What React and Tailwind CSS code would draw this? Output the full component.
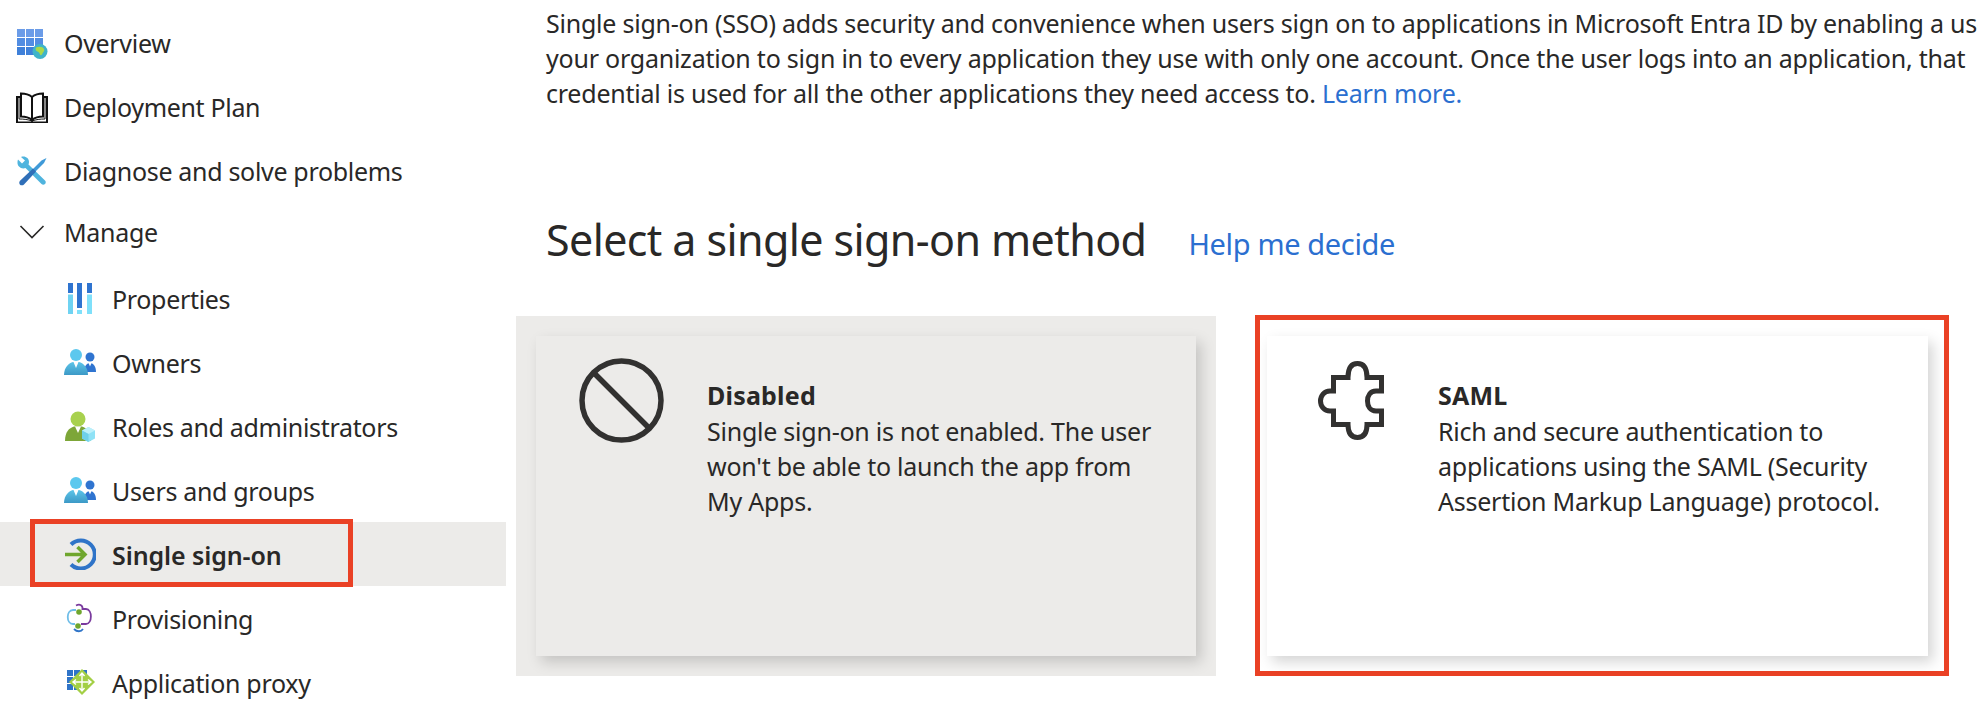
import React from 'react';

const OverviewIcon = () => (
    <svg width="32" height="32" viewBox="0 0 32 32">
        {[1, 10, 19].map((x) => <rect key={x} x={x} y="2" width="8" height="8" fill="#6b9ce8" />)}
        {[1, 10, 19].map((x) => <rect key={x} x={x} y="11" width="8" height="8" fill="#528de2" />)}
        {[1, 10, 19].map((x) => <rect key={x} x={x} y="20" width="8" height="8" fill="#3f80d9" />)}
        <circle cx="24" cy="24.5" r="7.5" fill="#3fb4c9" />
        <path d="M20 20.5c3-1.5 7-1 8 1.5 1 2-1 3-1.5 4.5-.5 1.500-2 2.500-2.500 1-.5-1.500-1-2.500-2.500-3-1.500-.5-2.500-2.500-1.500-4z" fill="#a9d94a" />
    </svg>
);

const BookIcon = () => (
    <svg width="32" height="32" viewBox="0 0 32 32" fill="none" stroke="#111" strokeWidth="2">
        <path d="M4.500 6H1v25.500h30V6h-3.500" />
        <path d="M5 2.500c4.500 0 8 1 11 3.500v23c-3-2.500-6.500-3.500-11-3.500z" />
        <path d="M27 2.500c-4.500 0-8 1-11 3.500v23c3-2.500 6.500-3.500 11-3.500z" />
        <path d="M3 6v22c5 0 9 .5 13 2 4-1.500 8-2 13-2V6" strokeWidth="1" />
    </svg>
);

const ToolsIcon = () => (
    <svg width="32" height="32" viewBox="0 0 32 32">
        <path d="M2 4.500 6 8.500 9 5.500 5 2c4-1.500 8 1 8 5 0 1-.2 1.500-.5 2.500L29 25.500c1 1 1 2.500 0 3.500s-2.500 1-3.500 0L9.500 13c-4 1.500-8.500-1.500-8-6 0-1 .2-1.800.5-2.500z" fill="#4fb4de" />
        <path d="M30.500 3 28 8 18.500 17.500 16 15 25.500 5.500z" fill="#3f9ad8" />
        <path d="M17 13.500 20 16.500 8 29.500c-1 1-3 1.200-4 .2s-1-3 0-4z" fill="#2f6fb8" />
    </svg>
);

const PropertiesIcon = () => (
    <svg width="32" height="32" viewBox="0 0 32 32">
        <rect x="4" y="1" width="5" height="10" fill="#2f74d0" />
        <rect x="4" y="12.500" width="5" height="20" fill="#6fd3f2" />
        <rect x="13" y="1" width="5" height="25" fill="#2f74d0" />
        <rect x="13" y="28" width="5" height="5" fill="#7fe0fa" />
        <rect x="23" y="1" width="5" height="10" fill="#2f74d0" />
        <rect x="23" y="12.500" width="5" height="20" fill="#7fe0fa" />
    </svg>
);

const UsersIcon = () => (
    <svg width="32" height="32" viewBox="0 0 32 32">
        <defs>
            <linearGradient id="userBody" x1="0" y1="0" x2="0" y2="1">
                <stop offset="0" stopColor="#5cc4e8" />
                <stop offset="1" stopColor="#3c99c6" />
            </linearGradient>
        </defs>
        <circle cx="26" cy="11" r="4.500" fill="#2f74d0" />
        <path d="M20 26c0-6 3-9 6-9s6 3 6 9z" fill="#2f74d0" />
        <path d="M24.500 17h3l-1.500 3.500z" fill="#fff" />
        <circle cx="12" cy="9" r="6" fill="#5cc8ee" />
        <path d="M0 29c0-8 5-12 9-13h6c4 1 9 5 9 13z" fill="url(#userBody)" />
        <path d="M9.500 16h5L12 22z" fill="#fff" />
    </svg>
);

const RolesIcon = () => (
    <svg width="32" height="32" viewBox="0 0 32 32">
        <circle cx="14" cy="9" r="7.500" fill="#a8d14e" />
        <path d="M1 31c0-9 4-13 9-14.500h8c5 1.500 9 5.500 9 14.500z" fill="#7da638" />
        <path d="M11 16.500h6L14 23z" fill="#fff" />
        <path d="M24.500 17 31 20.500v8L24.500 32 18 28.500v-8z" fill="#8fe2f6" />
        <path d="M18 20.500 24.500 24 31 20.500 24.500 17z" fill="#bdf0fa" />
        <path d="M24.500 24v8L18 28.500v-8z" fill="#6fd0ea" />
    </svg>
);

const SsoIcon = () => (
    <svg width="32" height="32" viewBox="0 0 32 32" fill="none">
        <path d="M7 6.500A14 14 0 1 1 7 26.500" stroke="#2f74c8" strokeWidth="4" />
        <path d="M1 16.500h19M13.500 9l7.500 7.500-7.500 7.500" stroke="#6fa62e" strokeWidth="3.500" />
    </svg>
);

const ProvisioningIcon = () => (
    <svg width="32" height="32" viewBox="0 0 32 32" fill="none">
        <path d="M12 8H9c-7 0-7 14 0 14h2" stroke="#6fbde8" strokeWidth="1.800" />
        <path d="M12 3.500c4-2 7 0 6.500 3.500H22c6.500 0 6.500 15 0 15h-5" stroke="#7a3b9e" strokeWidth="1.800" />
        <path d="M10 27c3 3 7 3 9 0" stroke="#2f74c8" strokeWidth="1.800" />
        <circle cx="15" cy="10" r="2.800" fill="#6fa62e" />
        <circle cx="14" cy="24" r="2.800" fill="#6fa62e" />
    </svg>
);

const ProxyIcon = () => (
    <svg width="32" height="32" viewBox="0 0 32 32">
        {[3, 10, 17].map((x) => [4, 11, 18].map((y) => (
            <rect key={`${x}-${y}`} x={x} y={y} width="6" height="6" fill="#2f74c8" />
        )))}
        <path d="M18 3 31 16 18 29 5 16z" fill="#a3cf45" />
        <path d="M18 7v18M9 16h18M15.500 10 18 7l2.500 3M15.500 22l2.500 3 2.500-3M12 13.500 9 16l3 2.500M24 13.500l3 2.500-3 2.500" stroke="#fff" strokeWidth="1.400" fill="none" />
    </svg>
);

const navTop = [
    { label: 'Overview', icon: <OverviewIcon /> },
    { label: 'Deployment Plan', icon: <BookIcon /> },
    { label: 'Diagnose and solve problems', icon: <ToolsIcon /> },
];

const navManage = [
    { label: 'Properties', icon: <PropertiesIcon /> },
    { label: 'Owners', icon: <UsersIcon /> },
    { label: 'Roles and administrators', icon: <RolesIcon /> },
    { label: 'Users and groups', icon: <UsersIcon /> },
    { label: 'Single sign-on', icon: <SsoIcon />, active: true },
    { label: 'Provisioning', icon: <ProvisioningIcon /> },
    { label: 'Application proxy', icon: <ProxyIcon /> },
];

const Sidebar = () => (
    <aside className="w-[506px] shrink-0 pt-[11px] tracking-[-0.32px]">
        {navTop.map((item) => (
            <div key={item.label} className="flex h-16 items-center gap-4 pl-4">
                {item.icon}
                <span>{item.label}</span>
            </div>
        ))}
        <div className="mb-[5px] flex h-[58px] items-center gap-4 pl-4">
            <svg width="32" height="32" viewBox="0 0 32 32" fill="none" stroke="#292827" strokeWidth="1.600">
                <path d="M4.500 10 16 21.500 27.500 10" />
            </svg>
            <span>Manage</span>
        </div>
        {navManage.map((item) => (
            <div key={item.label} className={`relative flex h-16 items-center gap-4 pl-16 ${item.active ? 'bg-[#ecebe9] font-semibold tracking-[-0.1px]' : ''}`}>
                {item.icon}
                <span className="mt-[2px]">{item.label}</span>
                {item.active && (
                    <div className="absolute left-[30px] top-[-3px] h-[68px] w-[323px] border-[5px] border-[#ea4125]" />
                )}
            </div>
        ))}
    </aside>
);

const BanIcon = () => (
    <svg width="85" height="85" viewBox="0 0 85 85" fill="none" stroke="#323130" strokeWidth="5.500">
        <circle cx="42.500" cy="42.500" r="39.500" />
        <path d="M15 15 70 70" />
    </svg>
);

const PuzzleIcon = () => (
    <svg width="66" height="79" viewBox="0 0 66 79" fill="none" stroke="#323130" strokeWidth="5">
        <path d="M15.500 16.500H30C30 8 33 2.500 39.500 2.500S49 8 49 16.500H63.500V30H58C52 30 49.500 35 49.500 40S52 50 58 50H63.500V63.500H49C49 72 46 76.500 39.500 76.500S30 72 30 63.500H15.500V50H12C6 50 2.500 45 2.500 40S6 30 12 30H15.500Z" />
    </svg>
);

const MethodCard = ({ title, lines, icon, iconClass, bg }) => (
    <div className={`flex h-[320px] shadow-[5px_6px_13px_rgba(0,0,0,0.17)] ${bg}`}>
        <div className={`w-[171px] shrink-0 ${iconClass}`}>{icon}</div>
        <div className="pt-[42px] tracking-[-0.24px]">
            <div className="mb-px font-bold tracking-[0.2px]">{title}</div>
            {lines.map((line) => <div key={line}>{line}</div>)}
        </div>
    </div>
);

export default function App() {
    return (
        <div className="flex h-[708px] w-[1978px] overflow-hidden bg-white text-[25px] leading-[35px] text-[#292827] [font-family:'Noto_Sans',sans-serif]">
            <Sidebar />
            <main className="min-w-0 flex-1 overflow-hidden pl-[10px]">
                <div className="whitespace-nowrap pl-[30px] pt-[6px] tracking-[-0.23px]">
                    <div>Single sign-on (SSO) adds security and convenience when users sign on to applications in Microsoft Entra ID by enabling a user in</div>
                    <div>your organization to sign in to every application they use with only one account. Once the user logs into an application, that</div>
                    <div>
                        credential is used for all the other applications they need access to.{' '}
                        <span className="text-[#2b6fd0]">Learn more.</span>
                    </div>
                </div>
                <div className="mt-[98px] flex h-[60px] items-center whitespace-nowrap pl-[30px]">
                    <h1 className="text-[43px] font-normal tracking-[-0.6px]">Select a single sign-on method</h1>
                    <span className="ml-[42px] mt-2 text-[29px] tracking-[-0.35px] text-[#2b6fd0]">Help me decide</span>
                </div>
                <div className="mt-[46px] flex items-start">
                    <div className="mt-px h-[360px] w-[700px] shrink-0 bg-[#ecebe9] p-5">
                        <MethodCard
                            title="Disabled"
                            lines={['Single sign-on is not enabled. The user', "won't be able to launch the app from", 'My Apps.']}
                            icon={<BanIcon />}
                            iconClass="pl-[43px] pt-[22px]"
                            bg="bg-[#ecebe9]"
                        />
                    </div>
                    <div className="ml-[39px] h-[361px] w-[694px] shrink-0 border-[5px] border-[#ea4125] pl-[7px] pt-4">
                        <div className="w-[661px]">
                            <MethodCard
                                title="SAML"
                                lines={['Rich and secure authentication to', 'applications using the SAML (Security', 'Assertion Markup Language) protocol.']}
                                icon={<PuzzleIcon />}
                                iconClass="pl-[51px] pt-[25px]"
                                bg="bg-white"
                            />
                        </div>
                    </div>
                </div>
            </main>
        </div>
    );
}
